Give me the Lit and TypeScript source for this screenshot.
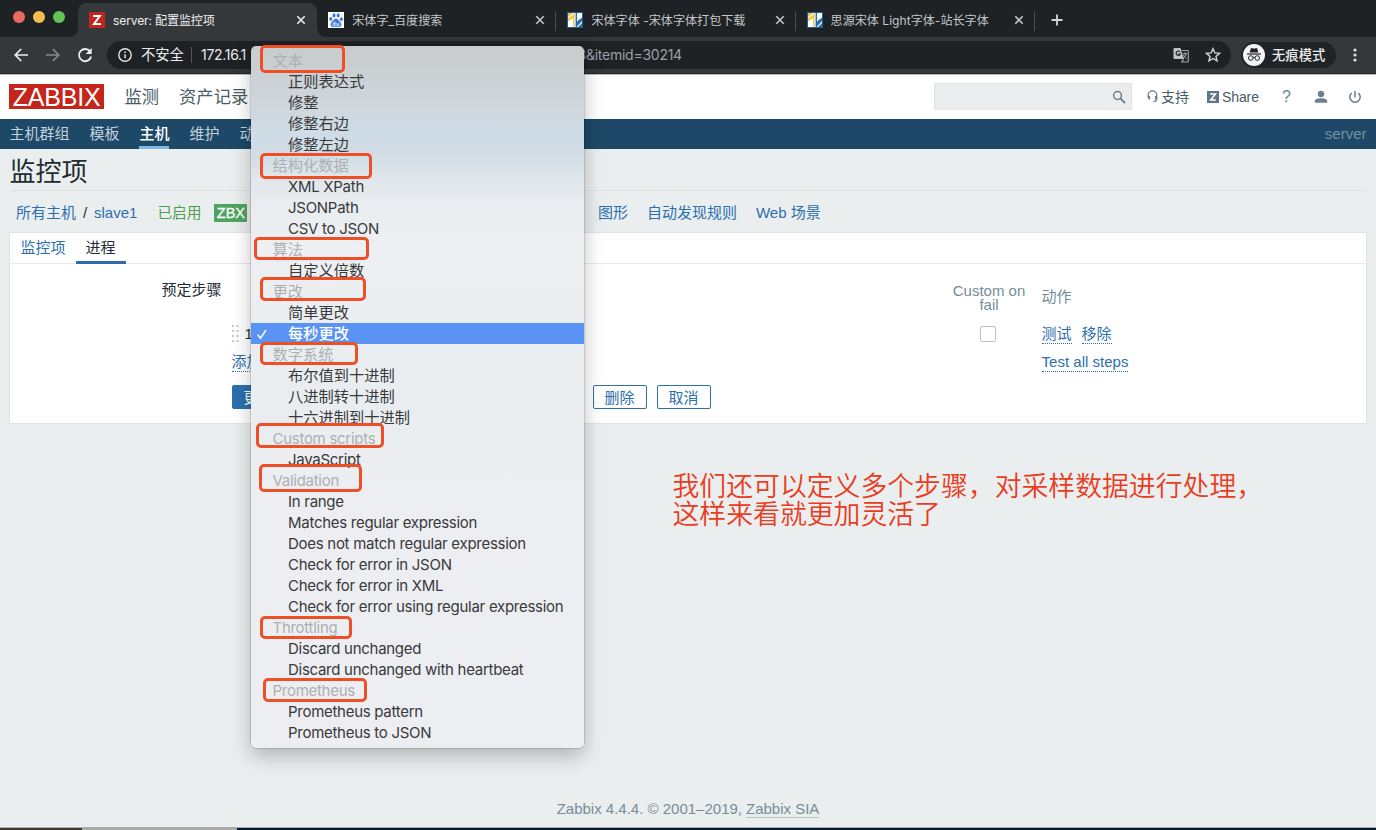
import { LitElement, html, css, svg } from "lit";
import { customElement } from "lit/decorators.js";
import { classMap } from "lit/directives/class-map.js";

interface MenuRow { text: string; kind: "group" | "item"; selected?: boolean; }

const group = (text: string): MenuRow => ({ text, kind: "group" });
const item = (text: string, selected = false): MenuRow => ({ text, kind: "item", selected });

const ROWS: MenuRow[] = [
  group("文本"), item("正则表达式"), item("修整"), item("修整右边"), item("修整左边"),
  group("结构化数据"), item("XML XPath"), item("JSONPath"), item("CSV to JSON"),
  group("算法"), item("自定义倍数"),
  group("更改"), item("简单更改"), item("每秒更改", true),
  group("数字系统"), item("布尔值到十进制"), item("八进制转十进制"), item("十六进制到十进制"),
  group("Custom scripts"), item("JavaScript"),
  group("Validation"), item("In range"), item("Matches regular expression"),
  item("Does not match regular expression"), item("Check for error in JSON"),
  item("Check for error in XML"), item("Check for error using regular expression"),
  group("Throttling"), item("Discard unchanged"), item("Discard unchanged with heartbeat"),
  group("Prometheus"), item("Prometheus pattern"), item("Prometheus to JSON"),
];

/* left, top, right, bottom of each hand-drawn marker */
const MARKS = [
  [260, 45, 345, 73], [260, 153, 371.5, 179], [254, 237, 369, 260],
  [260, 276.5, 366, 301], [260, 342, 358, 364.5], [256, 422.5, 384, 448],
  [259, 463.5, 361.5, 492], [259.5, 616, 352, 639], [263, 677.5, 367, 702],
];

const CJK = /[\u4e00-\u9fff]/;

const zFav = html`<svg class="fav" viewBox="0 0 16 16"><rect width="16" height="16" fill="#c3241b"/><path d="M4 4h6.800L5 12h7" fill="none" stroke="#fff" stroke-width="2"/></svg>`;
const pawFav = html`<svg class="fav" viewBox="0 0 16 16"><rect width="16" height="16" fill="#fff"/><g fill="#3a78e0"><ellipse cx="2.800" cy="7" rx="1.500" ry="1.900"/><ellipse cx="6" cy="3.400" rx="1.500" ry="2.100"/><ellipse cx="10.200" cy="3.400" rx="1.500" ry="2.100"/><ellipse cx="13.400" cy="7.200" rx="1.500" ry="1.900"/><path d="M8 6.600c1.500 0 2 1.200 3 2.200 1.300 1.200 2.700 2.200 2.400 4.100-.3 1.700-1.700 2.100-3 2-1.500-.2-3.200-.2-4.800 0-1.400.1-2.800-.4-3-2-.2-1.900 1.100-2.900 2.400-4.100 1-1 1.500-2.200 3-2.200z"/></g><path d="M7 9.500v4M7 11.300H5.600a.9.9 0 0 0-.9 1v.4a.9.9 0 0 0 .9.9H7M8.800 11v1.800a.8.8 0 0 0 .8.8H11V11" fill="none" stroke="#fff" stroke-width=".9"/></svg>`;
const zzFav = html`<svg class="fav" viewBox="0 0 16 16"><rect width="16" height="16" fill="#1d5fa0"/><rect x="1" y="1" width="14" height="14" fill="#fff"/><path d="M1 1h5L1 5z" fill="#e9c244"/><path d="M1 6.500L7.500 1V15H6V6L1 9.500z" fill="#f2c744"/><path d="M8.600 1H10V9.500L15 5.500V9L9.500 15H8.600z" fill="#2a6cab"/><path d="M15 11v4h-4z" fill="#2a6cab"/></svg>`;
const closeX = html`<svg class="close" viewBox="0 0 10 10"><path d="M1.300 1.300l7.400 7.400M8.700 1.300L1.300 8.700" stroke="currentColor" stroke-width="1.600"/></svg>`;

const TABS = [
  { title: "server: 配置监控项", fav: zFav },
  { title: "宋体字_百度搜索", fav: pawFav },
  { title: "宋体字体 -宋体字体打包下载", fav: zzFav },
  { title: "思源宋体 Light字体-站长字体", fav: zzFav },
];

@customElement("browser-chrome")
class BrowserChrome extends LitElement {
  static styles = css`
    :host { display: block; font-family: Inter, "Noto Sans CJK SC", sans-serif; color: #e8eaed; }
    svg { display: block; flex: none; }
    .strip { display: flex; align-items: flex-start; height: 37px; background: #1f2224; }
    .lights { display: flex; gap: 8px; width: 65.500px; padding: 10.500px 0 0 12.500px; }
    .light { width: 12px; height: 12px; border-radius: 50%; background: #ed6a5e; }
    .light.min { background: #f5bd4f; }
    .light.max { background: #61c454; }
    .tab { position: relative; display: flex; align-items: center; box-sizing: border-box; width: 239.200px; height: 34px; margin-top: 3px; padding: 0 11px; gap: 8px; font-size: 12.100px; color: #c3c6ca; }
    .tab.active { background: #35383b; color: #eceef0; border-radius: 8px 8px 0 0; letter-spacing: -.15px; }
    .tab.active::before, .tab.active::after { content: ""; position: absolute; bottom: 0; left: -8px; width: 8px; height: 8px; background: radial-gradient(circle at 0 0, transparent 7.500px, #35383b 8px); }
    .tab.active::after { left: auto; right: -8px; background: radial-gradient(circle at 100% 0, transparent 7.500px, #35383b 8px); }
    .tab.divided::after { content: ""; position: absolute; right: 0; top: 8px; width: 1px; height: 20px; background: #4b4e51; }
    .fav { width: 16px; height: 16px; }
    .close { width: 10px; height: 10px; }
    .title { flex: 1; padding-top: 1px; white-space: nowrap; }
    .plus { width: 12px; height: 12px; margin: 14px 0 0 16px; }
    .bar { display: flex; align-items: center; box-sizing: border-box; height: 37px; padding: 0 16px 0 13px; background: #35383b; border-bottom: 1px solid #222527; }
    .nav { width: 16px; height: 16px; margin-right: 16px; }
    .omni { display: flex; align-items: center; box-sizing: border-box; width: 1125px; height: 28px; margin-left: -2px; padding: 0 10px; border-radius: 14px; background: #1f2224; font-size: 14px; }
    .insecure { width: 43px; margin-left: 8px; white-space: nowrap; font-size: 14.300px; }
    .sep { width: 1px; height: 16px; margin: 0 9px 0 7px; background: #56595c; }
    .host { width: 376.500px; letter-spacing: -.3px; white-space: nowrap; }
    .query { flex: 1; color: #9aa0a6; letter-spacing: -.25px; }
    .trans { width: 16px; height: 16px; margin-right: 16px; }
    .star { width: 16px; height: 16px; }
    .incog { display: flex; align-items: center; box-sizing: border-box; width: 95px; height: 26px; margin: 0 14px 0 10px; padding-left: 2px; gap: 7px; border-radius: 13px; background: #202326; font-size: 13.300px; font-weight: 500; white-space: nowrap; }
    .dots { width: 10px; height: 16px; }
  `;
  render() {
    return html`
      <div class="strip">
        <div class="lights"><span class="light"></span><span class="light min"></span><span class="light max"></span></div>
        ${TABS.map((t, i) => html`<div class=${classMap({ tab: true, active: i === 0, divided: i > 0 })}>${t.fav}<span class="title">${t.title}</span>${closeX}</div>`)}
        <svg class="plus" viewBox="0 0 12 12"><path d="M6 .5v11M.5 6h11" stroke="#d4d6d8" stroke-width="1.800"/></svg>
      </div>
      <div class="bar">
        <svg class="nav" viewBox="0 0 16 16"><path d="M15 8H2.500M8.200 2L2.200 8l6 6" fill="none" stroke="#eceef0" stroke-width="1.700"/></svg>
        <svg class="nav" viewBox="0 0 16 16"><path d="M1 8h12.500M7.800 2l6 6-6 6" fill="none" stroke="#86898c" stroke-width="1.700"/></svg>
        <svg class="nav" viewBox="0 0 16 16"><path d="M13.300 4.800A6.100 6.100 0 1 0 14.100 9.500" fill="none" stroke="#eceef0" stroke-width="1.800"/><path d="M14.700 1v6H8.700z" fill="#eceef0"/></svg>
        <div class="omni">
          <svg width="16" height="16" viewBox="0 0 16 16"><circle cx="8" cy="8" r="6.200" fill="none" stroke="#e3e5e8" stroke-width="1.400"/><path d="M8 7.200v4M8 4.500v1.500" stroke="#e3e5e8" stroke-width="1.500"/></svg>
          <span class="insecure">不安全</span><span class="sep"></span>
          <span class="host">172.16.1</span><span class="query">3&amp;itemid=30214</span>
          <svg class="trans" viewBox="0 0 16 16"><path d="M1.500 1h6l3.300 11h-9.300a1 1 0 0 1-1-1V2a1 1 0 0 1 1-1z" fill="#c0c2c4"/><path d="M7.200 5A2.200 2.200 0 1 0 7.400 7H5.300" fill="none" stroke="#1f2224" stroke-width="1.200"/><path d="M8.700 3.500h5.800a.8.8 0 0 1 .8.8v9.900a.8.8 0 0 1-.8.8H8.700l2-2.800" fill="none" stroke="#9b9ea0" stroke-width="1.200"/><path d="M9.500 6.800h4.500M11.800 5.500v1.300M13 7c-.4 1.800-1.700 3.200-3 4M10.500 8.200c.7 1.500 1.700 2.600 3 3.500" fill="none" stroke="#b4b6b8" stroke-width="1"/></svg>
          <svg class="star" viewBox="0 0 16 16"><path d="M8 1.700l1.850 4.250 4.650.4-3.520 3.050 1.060 4.500L8 11.500l-4.040 2.400 1.060-4.500L1.500 6.350l4.650-.4z" fill="none" stroke="#d5d7d9" stroke-width="1.400"/></svg>
        </div>
        <div class="incog">
          <svg width="22" height="22" viewBox="0 0 22 22"><circle cx="11" cy="11" r="11" fill="#f1f3f4"/><path d="M7.800 4.500l1-.4L11 4.700l2.200-.6 1 .4 1.200 4H6.600z" fill="#202326"/><path d="M4 10h14" stroke="#202326" stroke-width="1.200"/><circle cx="7.800" cy="14" r="2.300" fill="none" stroke="#202326"/><circle cx="14.200" cy="14" r="2.300" fill="none" stroke="#202326"/><path d="M10 13.500q1-.6 2 0" fill="none" stroke="#202326"/></svg>
          <span>无痕模式</span>
        </div>
        <svg class="dots" viewBox="0 0 10 16" fill="#dfe1e3"><circle cx="5" cy="3" r="1.600"/><circle cx="5" cy="8" r="1.600"/><circle cx="5" cy="13" r="1.600"/></svg>
      </div>`;
  }
}

@customElement("step-menu")
class StepMenu extends LitElement {
  static styles = css`
    :host { display: block; box-sizing: border-box; width: 333.400px; height: 702px; padding: 4px 0 5px; border-radius: 5px; font-family: Inter, "Noto Sans CJK SC", sans-serif; font-size: 15px; letter-spacing: -.28px; color: #38393b;
      background: linear-gradient(180deg, #c9cccd 0, #cbcfd1 22px, #cfd7dd 60px, #cfdbe5 85px, #d2dde6 112px, #e0e6eb 132px, #e9ecef 155px, #edeff2 200px, #e9edf0 340px, #edeef1 450px);
      box-shadow: 0 0 0 .5px rgba(0,0,0,.25), 0 8px 20px rgba(0,0,0,.25); }
    .row { display: flex; align-items: center; box-sizing: border-box; height: 21px; padding-top: 1px; white-space: nowrap; }
    .row.cjk { padding: 0; font-size: 15.250px; letter-spacing: 0; }
    .tick { width: 37px; flex: none; }
    .tick svg { display: block; margin-left: 5px; }
    .row.group { padding-left: 21.500px; color: #adb0b3; }
    .selected { background: #5b93f5; color: #fff; font-weight: 500; }
  `;
  render() {
    return html`${ROWS.map((r) => {
      const cjk = CJK.test(r.text);
      return r.kind === "group"
        ? html`<div class=${classMap({ row: true, group: true, cjk })}>${r.text}</div>`
        : html`<div class=${classMap({ row: true, cjk, selected: !!r.selected })}><span class="tick">${r.selected ? html`<svg width="12" height="12" viewBox="0 0 12 12"><path d="M1.800 6.800l2.700 3.500L10 2" fill="none" stroke="#fff" stroke-width="1.500"/></svg>` : ""}</span>${r.text}</div>`;
    })}`;
  }
}

@customElement("app-root")
class AppRoot extends LitElement {
  static styles = css`
    :host { display: block; position: relative; width: 1376px; height: 830px; overflow: hidden; background: #ebeeef; font-family: "Liberation Sans", "Noto Sans CJK SC", sans-serif; font-size: 15px; line-height: 20px; color: #1f2c33; }
    svg { display: block; flex: none; }
    .page { display: flex; flex-direction: column; height: 756px; }
    .head { display: flex; align-items: center; box-sizing: border-box; height: 45px; padding: 0 14px 1px 9px; background: #fff; border-top: 1px solid #b9bcbe; color: #4a5b65; }
    .logo { width: 95px; height: 25px; background: #c5251b; color: #fff; font-size: 25px; line-height: 26px; text-align: center; letter-spacing: -.2px; }
    .mods { display: flex; flex: 1; gap: 20px; margin-left: 20.500px; font-size: 17.300px; line-height: 18px; white-space: nowrap; }
    .search { display: flex; align-items: center; justify-content: flex-end; box-sizing: border-box; width: 198px; height: 27px; padding-right: 5px; background: #ebecee; border: 1px solid #e2e5e7; }
    .util { display: flex; align-items: center; gap: 3px; font-size: 14px; line-height: 18px; }
    .support { margin-left: 15px; width: 45px; }
    .share { margin-left: 15px; width: 52px; letter-spacing: -.1px; }
    .q { margin-left: 22px; width: 11px; font-size: 16px; text-align: center; color: #6d7f8b; }
    .user { margin-left: 22px; }
    .power { margin-left: 20px; }
    .sub { display: flex; gap: 20px; box-sizing: border-box; height: 30px; padding: 0 9.500px 0 9.400px; background: #1d4867; color: #c2d1dc; line-height: 30px; white-space: nowrap; }
    .sub .on { color: #fff; font-weight: 500; box-shadow: inset 0 -3px 0 #7cb8e8; }
    .who { margin-left: auto; color: #7690a2; }
    .body { padding: 0 9.500px; }
    h1 { margin: 0; padding-bottom: 1px; height: 40px; line-height: 47px; font-size: 26px; font-weight: 400; border-bottom: 1px solid #dde2e4; }
    .crumbs { display: flex; align-items: center; box-sizing: border-box; height: 41px; padding: 3.500px 0 0 6.500px; color: #2b70ad; white-space: nowrap; }
    .slash { width: 18px; text-align: center; color: #1f2c33; }
    .enabled { margin-left: 20px; color: #4f9f4c; font-size: 14.700px; }
    .zbx { margin-left: 13px; width: 33px; height: 18px; line-height: 19px; border-radius: 1px; background: #4fa35f; color: #fff; text-align: center; font-size: 14.500px; -webkit-text-stroke: .3px #fff; }
    .first { margin-left: 350.500px; }
    .link { margin-right: 19px; }
    .panel { box-sizing: border-box; height: 192px; margin-left: -.5px; background: #fff; border: 1px solid #dfe4e7; }
    .tabs { display: flex; box-sizing: border-box; height: 30.500px; padding-left: .5px; border-bottom: 1px solid #e8ebed; line-height: 29px; }
    .tabs span { padding: 0 10px; height: 31px; }
    .tabs .off { color: #2b70ad; }
    .tabs .on { box-shadow: inset 0 -3px 0 #2a6cad; }
    .form { display: grid; grid-template-columns: 211.500px 1fr; column-gap: 10px; }
    .label { padding-top: 16.500px; text-align: right; }
    .grid { display: grid; grid-template-columns: 711px 92px 1fr; align-items: center; color: #768d99; }
    .cof { width: 93px; margin-top: 20px; line-height: 14px; text-align: center; }
    .act { margin: 19px 0 0 7px; }
    .step { display: flex; align-items: center; gap: 6px; height: 44px; color: #1f2c33; }
    .box { box-sizing: border-box; width: 16.500px; height: 16.500px; margin: 1px 0 0 37px; border: 1px solid #b9c2c8; border-radius: 2px; background: #fff; }
    .acts { display: flex; gap: 10px; margin-left: 7px; }
    .dot { align-self: start; width: max-content; color: #2b70ad; line-height: 19px; border-bottom: 1px dotted #2b70ad; }
    .add { margin-top: -3.500px; }
    .all { margin-top: -3px; margin-left: 7px; line-height: 18px; letter-spacing: .02px; }
    .btns { display: flex; gap: 10px; margin-top: 12.500px; }
    .btn { box-sizing: border-box; width: 54px; height: 24px; line-height: 23px; text-align: center; border: 1px solid #2b70ad; border-radius: 2px; color: #2b70ad; }
    .btn.main { background: #2b70ad; color: #fff; }
    .btn.del { margin-left: 297px; }
    .foot { display: flex; justify-content: center; gap: 4px; margin-top: auto; padding-bottom: 9px; color: #768d99; line-height: 18px; }
    .foot span { padding-top: 1px; height: 17px; }
    .foot .sia { border-bottom: 1px solid #b8c5cc; }
    .desk { display: flex; height: 3px; box-sizing: border-box; border-top: 1px solid #aab0b3; background: #04182b; }
    .rock { width: 82px; background: #3e3a2d; }
    .dock { width: 155px; background: #a9a9a7; }
    .menu { position: absolute; left: 251px; top: 46px; }
    .mark { position: absolute; box-sizing: border-box; border: 3px solid #ee4f27; border-radius: 5px; }
    .note { position: absolute; left: 672.500px; top: 471px; margin: 0; color: #e93c20; font-family: "Noto Sans CJK SC", sans-serif; font-weight: 350; font-size: 26.850px; line-height: 28px; white-space: nowrap; }
  `;
  render() {
    return html`
      <browser-chrome></browser-chrome>
      <div class="page">
        <div class="head">
          <div class="logo">ZABBIX</div>
          <div class="mods"><span>监测</span><span>资产记录</span></div>
          <div class="search"><svg width="14" height="14" viewBox="0 0 14 14" fill="none" stroke="#6d7f8b"><circle cx="5.500" cy="5.500" r="3.900" stroke-width="1.500"/><path d="M8.300 8.300l4.700 4.700" stroke-width="1.900"/></svg></div>
          <div class="util support"><svg width="11" height="13" viewBox="0 0 11 13" fill="none" stroke="#6d7f8b" stroke-width="1.300"><path d="M1.200 8V5.200a4.300 4.300 0 0 1 8.600 0V8.200c0 2.300-1 3.300-3.300 3.300"/><path d="M2.200 6v3.600M8.800 6v3.600" stroke-width="1.800"/></svg><span>支持</span></div>
          <div class="util share"><svg width="12" height="12" viewBox="0 0 12 12"><rect width="12" height="12" fill="#5f7684"/><path d="M3.200 3h5.200L3.700 9h5.200" fill="none" stroke="#fff" stroke-width="1.600"/></svg><span>Share</span></div>
          <div class="q">?</div>
          <svg class="user" width="14" height="14" viewBox="0 0 14 14" fill="#6d7f8b"><circle cx="7" cy="4" r="3.200"/><path d="M.8 12.800V11c0-2 3.500-2.700 6.200-2.700s6.200.7 6.200 2.700v1.800z"/></svg>
          <svg class="power" width="14" height="14" viewBox="0 0 14 14" fill="none" stroke="#6d7f8b" stroke-width="1.500"><path d="M7 1v6.500M3.700 3A5.200 5.200 0 1 0 10.300 3"/></svg>
        </div>
        <div class="sub"><span>主机群组</span><span>模板</span><span class="on">主机</span><span>维护</span><span>动作</span><span class="who">server</span></div>
        <div class="body">
          <h1>监控项</h1>
          <div class="crumbs">
            <span>所有主机</span><span class="slash">/</span><span>slave1</span><span class="enabled">已启用</span><span class="zbx">ZBX</span>
            <span class="link first">图形</span><span class="link">自动发现规则</span><span class="link">Web 场景</span>
          </div>
          <div class="panel">
            <div class="tabs"><span class="off">监控项</span><span class="on">进程</span></div>
            <div class="form">
              <div class="label">预定步骤</div>
              <div>
                <div class="grid">
                  <span></span><span class="cof">Custom on fail</span><span class="act">动作</span>
                  <div class="step"><svg width="7" height="19" viewBox="0 0 7 19" fill="#c3ccd1">${[1, 6, 11, 16].map((y) => svg`<rect x="0" y=${y} width="2" height="2"/><rect x="4.500" y=${y} width="2" height="2"/>`)}</svg><span>1:</span></div>
                  <span class="box"></span>
                  <div class="acts"><span class="dot">测试</span><span class="dot">移除</span></div>
                  <span class="dot add">添加</span><span></span><span class="dot all">Test all steps</span>
                </div>
                <div class="btns"><span class="btn main">更新</span><span class="btn del">删除</span><span class="btn">取消</span></div>
              </div>
            </div>
          </div>
        </div>
        <div class="foot"><span>Zabbix 4.4.4. © 2001–2019,</span><span class="sia">Zabbix SIA</span></div>
        <div class="desk"><span class="rock"></span><span class="dock"></span></div>
      </div>
      <step-menu class="menu"></step-menu>
      ${MARKS.map(([l, t, r, b]) => html`<div class="mark" style="left:${l}px;top:${t}px;width:${r - l}px;height:${b - t}px"></div>`)}
      <p class="note">我们还可以定义多个步骤，对采样数据进行处理，<br>这样来看就更加灵活了</p>`;
  }
}
